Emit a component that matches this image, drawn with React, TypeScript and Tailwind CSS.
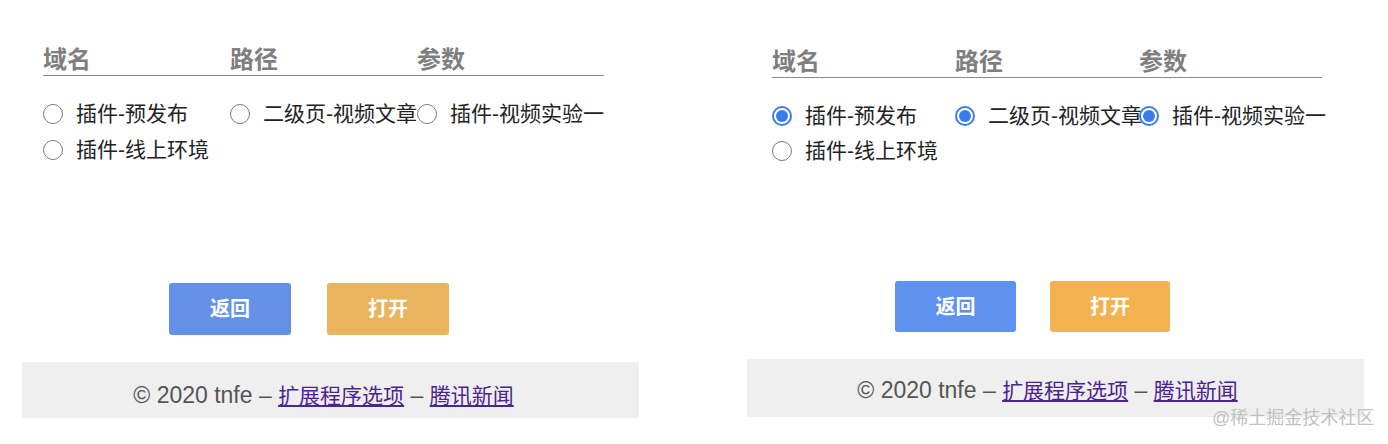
import React from "react";

const CJK = "font-['Liberation_Sans','Noto_Sans_CJK_SC',sans-serif]";

function Radio({ checked }: { checked: boolean }) {
  if (checked) {
    return (
      <span className="flex h-[20px] w-[20px] shrink-0 items-center justify-center rounded-full border-2 border-[#3a7cf0] bg-white">
        <span className="h-[12px] w-[12px] rounded-full bg-[#3a7cf0]" />
      </span>
    );
  }
  return <span className="h-[20px] w-[20px] shrink-0 rounded-full border border-[#7a7a7a] bg-white" />;
}

function Option({ label, checked }: { label: string; checked: boolean }) {
  return (
    <div className="flex items-center gap-[13px] whitespace-nowrap">
      <Radio checked={checked} />
      <span className="text-[21px] leading-[28px] text-[#222]">{label}</span>
    </div>
  );
}

const options = ["插件-预发布", "二级页-视频文章", "插件-视频实验一", "插件-线上环境"];

function Footer() {
  return (
    <>
      <span className="text-[23px] text-[#555]">© 2020 tnfe – </span>
      <a className="text-[#4b2490] underline" href="#">扩展程序选项</a>
      <span className="text-[23px] text-[#555]"> – </span>
      <a className="text-[#4b2490] underline" href="#">腾讯新闻</a>
    </>
  );
}

export default function App() {
  return (
    <div className={`relative flex h-[444px] w-[1388px] bg-white ${CJK}`}>
      {/* Left panel */}
      <div className="ml-[22px] flex w-[617px] flex-col pt-[46px]">
        <div className="ml-[21px] grid h-[30px] w-[561px] grid-cols-[187px_187px_187px] border-b border-[#8a8a8a]">
          <span className="text-[24px] font-bold leading-[28px] text-[#7f7f7f]">域名</span>
          <span className="text-[24px] font-bold leading-[28px] text-[#7f7f7f]">路径</span>
          <span className="text-[24px] font-bold leading-[28px] text-[#7f7f7f]">参数</span>
        </div>
        <div className="ml-[21px] mt-[20px] grid grid-cols-[187px_187px_187px] auto-rows-[36px] items-center">
          {options.map((o) => (
            <Option key={o} label={o} checked={false} />
          ))}
        </div>
        <div className="ml-[147px] mt-[115px] flex gap-[36px]">
          <button className="h-[52px] w-[122px] rounded-[3px] bg-[#6391e8] text-[20px] font-bold text-white">返回</button>
          <button className="h-[52px] w-[122px] rounded-[3px] bg-[#eab35e] text-[20px] font-bold text-white">打开</button>
        </div>
        <div className="mt-[27px] h-[56px] bg-[#efefef] pr-[14px] pt-[19px] text-center text-[21px] leading-[28px]">
          <Footer />
        </div>
      </div>

      {/* Right panel */}
      <div className="ml-[108px] flex w-[617px] flex-col pt-[48px]">
        <div className="ml-[25px] grid h-[30px] w-[550px] grid-cols-[183px_184px_183px] border-b border-[#8a8a8a]">
          <span className="text-[24px] font-bold leading-[28px] text-[#7f7f7f]">域名</span>
          <span className="text-[24px] font-bold leading-[28px] text-[#7f7f7f]">路径</span>
          <span className="text-[24px] font-bold leading-[28px] text-[#7f7f7f]">参数</span>
        </div>
        <div className="ml-[25px] mt-[20px] grid grid-cols-[183px_184px_183px] auto-rows-[35px] items-center">
          {options.map((o, i) => (
            <Option key={o} label={o} checked={i < 3} />
          ))}
        </div>
        <div className="ml-[148px] mt-[113px] flex gap-[34px]">
          <button className="h-[51px] w-[121px] rounded-[3px] bg-[#5e91f0] text-[20px] font-bold text-white">返回</button>
          <button className="h-[51px] w-[120px] rounded-[3px] bg-[#f1b24f] text-[20px] font-bold text-white">打开</button>
        </div>
        <div className="mt-[27px] h-[58px] bg-[#efefef] pr-[16px] pt-[17px] text-center text-[21px] leading-[28px]">
          <Footer />
        </div>
      </div>

      <div className="absolute left-[1212px] top-[406px] text-[18px] leading-[24px] text-[#c2c2c2]">@稀土掘金技术社区</div>
    </div>
  );
}
